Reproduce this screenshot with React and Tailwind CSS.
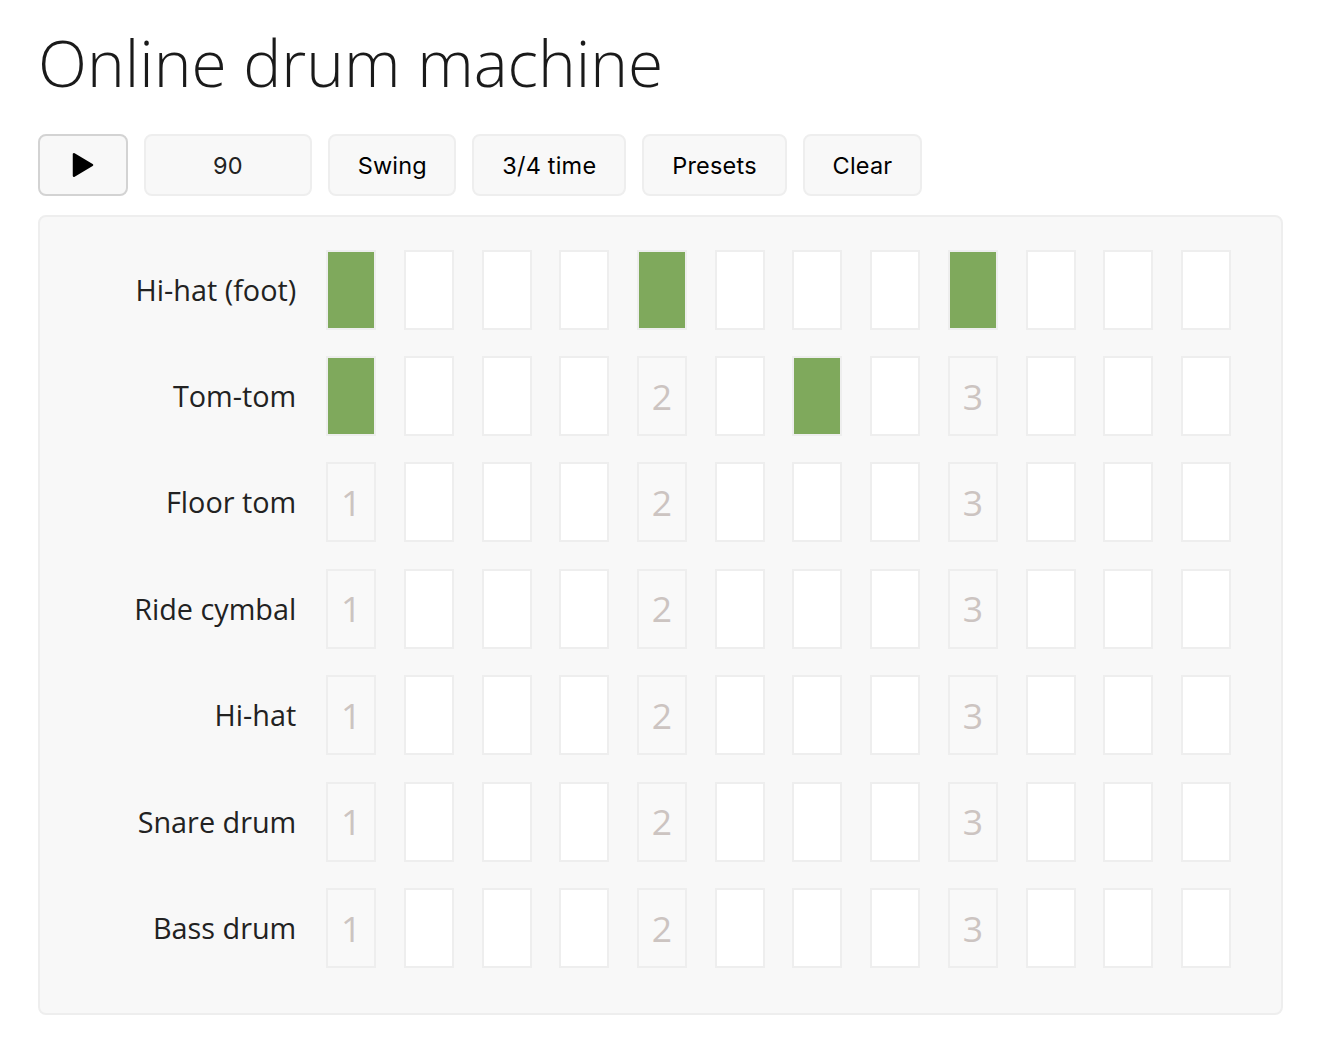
const tracks = [
  { name: "Hi-hat (foot)", on: [0, 4, 8] },
  { name: "Tom-tom", on: [0, 6] },
  { name: "Floor tom", on: [] },
  { name: "Ride cymbal", on: [] },
  { name: "Hi-hat", on: [] },
  { name: "Snare drum", on: [] },
  { name: "Bass drum", on: [] },
];
const steps = Array.from({ length: 12 }, (_, i) => i);

function Step({ i, on }) {
  const beat = i % 4 === 0;
  const fill = on ? "bg-[#7fa95c]" : beat ? "bg-[#f9f9f9]" : "bg-white";
  return (
    <button className={`flex h-20 w-[50px] shrink-0 items-center justify-center border-2 border-[#eeeeee] pt-[0.7px] text-[35.5px] leading-none text-[#ccc4c1] ${fill}`}>
      {beat && !on ? i / 4 + 1 : null}
    </button>
  );
}

const control = "flex h-[62px] items-center justify-center rounded-[8px] border-2 bg-[#f8f8f8] pt-[2px] font-['Inter',sans-serif] text-[23.5px] font-[370] tracking-[0.2px]";

export default function App() {
  return (
    <main className="h-[1050px] w-[1320px] overflow-hidden bg-white pl-[38px] pt-[15px] font-['Open_Sans',sans-serif] text-[#222222]">
      <h1 className="h-[119px] whitespace-nowrap text-[64px] font-light leading-[96px] text-[#1a1a1a]">Online drum machine</h1>
      <div className="flex gap-4">
        <button aria-label="Play" className={`${control} w-[90px] border-[#d3d3d3] text-black`}>
          <svg className="mb-[2px] h-[26px] w-[22px]" viewBox="0 0 22 26"><path d="M2 2.2v21.6L20 13z" stroke="#000" strokeWidth="2.5" strokeLinejoin="round" /></svg>
        </button>
        <div className={`${control} w-[168px] border-[#eeeeee] text-[#222222]`}>90</div>
        <button className={`${control} w-[128px] border-[#eeeeee] pl-[0.6px] text-black`}>Swing</button>
        <button className={`${control} w-[154px] border-[#eeeeee] pl-[0.6px] text-black`}>3/4 time</button>
        <button className={`${control} w-[145px] border-[#eeeeee] text-black`}>Presets</button>
        <button className={`${control} w-[119px] border-[#eeeeee] text-black`}>Clear</button>
      </div>
      <section className="mt-[19px] flex h-[800px] w-[1245px] flex-col gap-[26.375px] rounded-[8px] border-2 border-[#eeeeee] bg-[#f8f8f8] pt-[32.7px]">
        {tracks.map((t) => (
          <div key={t.name} className="flex h-20 shrink-0 items-center">
            <div className="w-[256.25px] whitespace-nowrap pb-[0.8px] text-right text-[28.8px]">{t.name}</div>
            <div className="ml-[29.96px] flex gap-[27.71px]">
              {steps.map((i) => <Step key={i} i={i} on={t.on.includes(i)} />)}
            </div>
          </div>
        ))}
      </section>
    </main>
  );
}
